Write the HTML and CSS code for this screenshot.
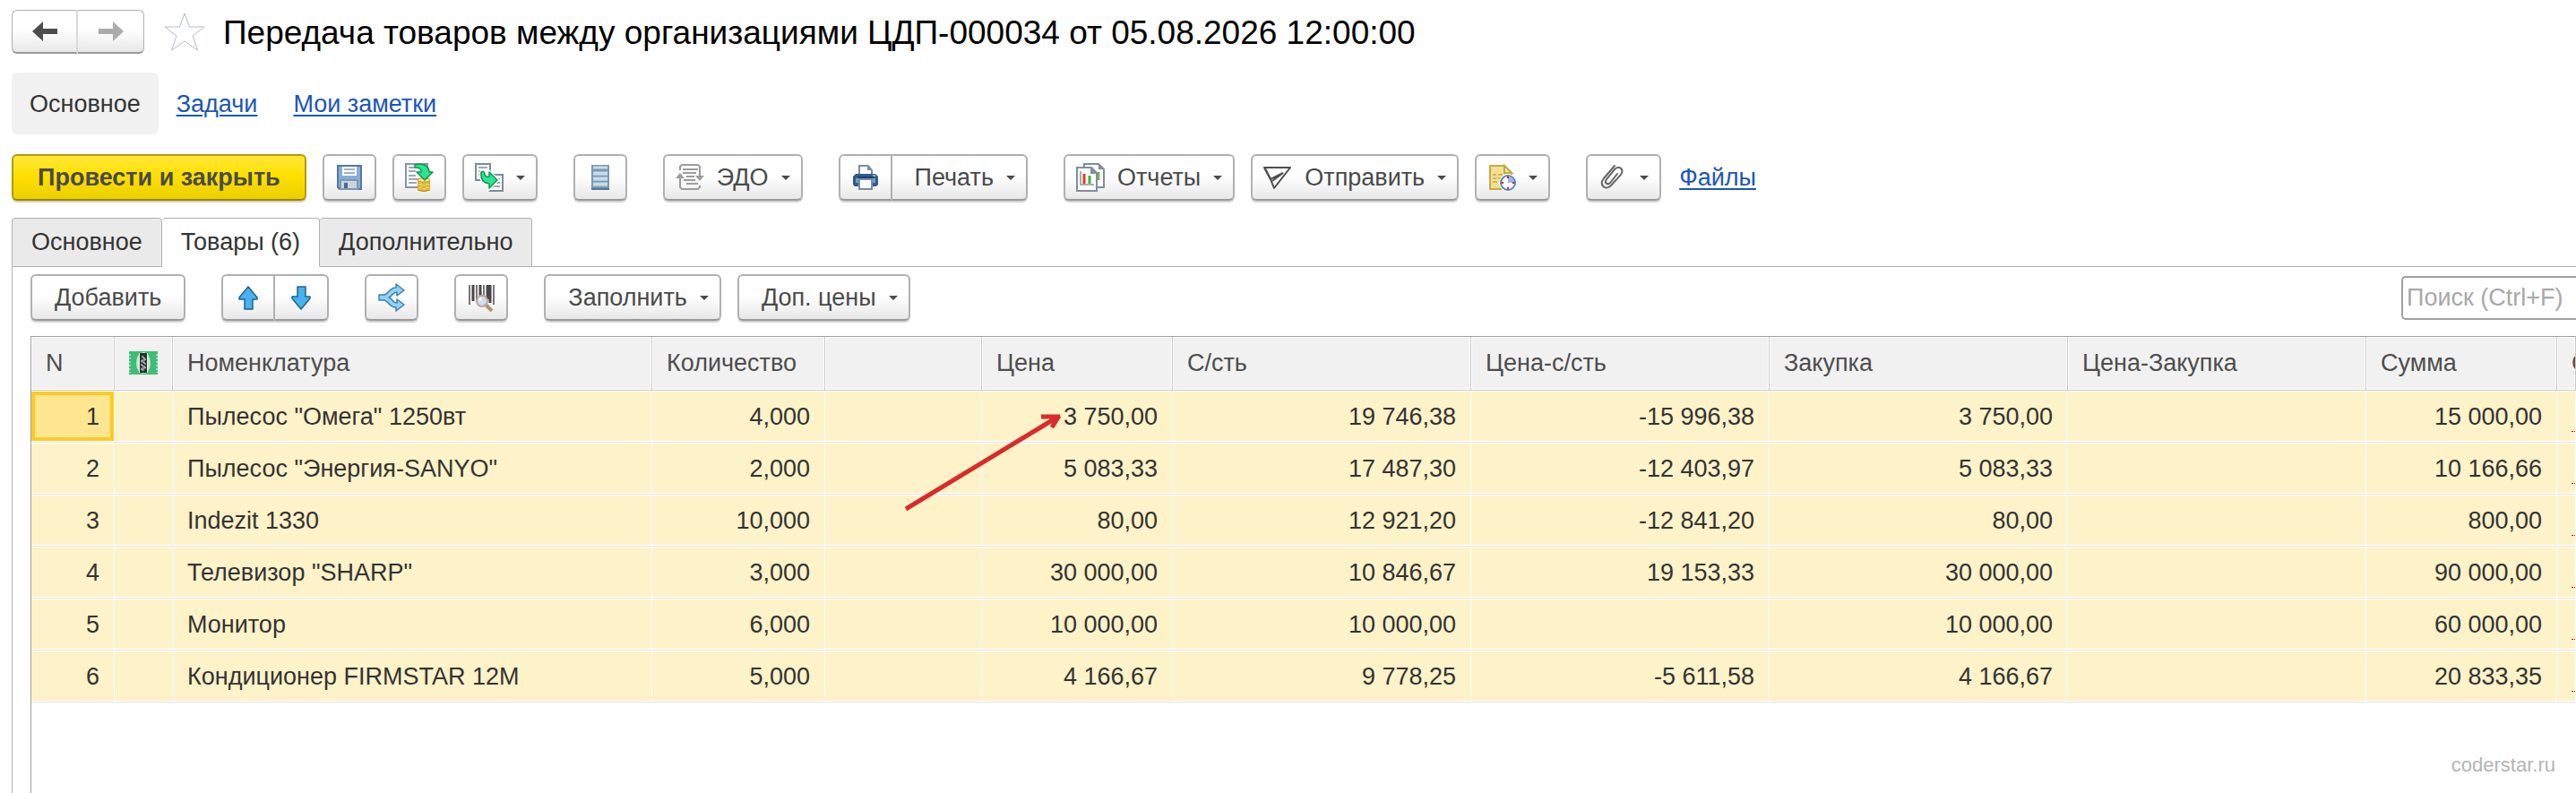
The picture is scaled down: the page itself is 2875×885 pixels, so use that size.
FILE: index.html
```
<!DOCTYPE html>
<html lang="ru">
<head>
    <meta charset="UTF-8">
    <meta name="viewport" content="width=device-width, initial-scale=1.0">
    <title>Передача товаров между организациями</title>
    <link rel="stylesheet" href="styles.css">
</head>
<body>
<header class="formHeader">
    <div class="btnGroup navButtons">
        <button type="button" class="btn" aria-label="Назад">
            <svg width="28" height="22" viewBox="0 0 28 22"><path d="M0 11 12 0V8H28V14H12V22Z" fill="#4d4d4d"/></svg>
        </button>
        <button type="button" class="btn" aria-label="Вперед">
            <svg width="28" height="22" viewBox="0 0 28 22"><path d="M28 11 16 0V8H0V14H16V22Z" fill="#ababab"/></svg>
        </button>
    </div>
    <button type="button" class="favorite" aria-label="В избранное">
        <svg width="48" height="46" viewBox="0 0 48 46"><path d="M24 2 29.500 17H46L33 27 38.500 43 24 33 9.500 43 15 27 2 17H18.500Z" fill="#fff" stroke="#b4bcc4" stroke-width="1"/></svg>
    </button>
    <h1>Передача товаров между организациями ЦДП-000034 от 05.08.2026 12:00:00</h1>
</header>

<nav class="sections">
    <span class="current">Основное</span>
    <a href="#tasks">Задачи</a>
    <a href="#notes">Мои заметки</a>
</nav>

<div class="commandBar">
    <div class="commands">
        <button type="button" class="btn primary">Провести и закрыть</button>
        <button type="button" class="btn" aria-label="Записать">
            <svg class="icon" viewBox="0 0 32 32">
                <path d="M2 2H30V30H5L2 27Z" fill="#86aedb"/>
                <path d="M3 2V27L5 29H29V2" fill="none" stroke="#54789f" stroke-width="2"/>
                <path d="M8 2H24V14H8Z" fill="#fff"/>
                <path d="M4 3H28" stroke="#54789f" stroke-width="2"/>
                <path d="M10 7H22M10 11H22" stroke="#9fb2c8" stroke-width="2"/>
                <path d="M6 19H25V29H6Z" fill="#cdd5d8" stroke="#7f97b0" stroke-width="2"/>
                <path d="M10 22H14V28H10Z" fill="#3f6da3"/>
            </svg>
        </button>
        <button type="button" class="btn" aria-label="Провести">
            <svg class="icon" viewBox="0 0 32 32">
                <path d="M1 1H25V27H1Z" fill="#fff" stroke="#8595a8" stroke-width="2"/>
                <path d="M4 5H11M4 9H12M4 14H12M4 18H16M4 22H13" stroke="#9aa8b6" stroke-width="2"/>
                <path d="M14 19H28V30Q21 34 14 30Z" fill="#e5b93a"/>
                <ellipse cx="21" cy="19" rx="7" ry="2" fill="#fff0a0" stroke="#c99716"/>
                <path d="M14 22Q21 26 28 22M14 26Q21 30 28 26M14 30Q21 33 28 30" fill="none" stroke="#b9860f" stroke-width="1"/>
                <path d="M15 23Q21 26 27 23M15 27Q21 30 27 27" fill="none" stroke="#ffe88c" stroke-width="1"/>
                <path d="M11 2Q26 -1 27 10H31L22 19 13 10H18Q19 5 11 5Z" fill="#27e88e" stroke="#14934d" stroke-width="1.500" stroke-linejoin="round"/>
            </svg>
        </button>
        <button type="button" class="btn" aria-label="Создать на основании">
            <svg class="icon" viewBox="0 0 32 32">
                <path d="M1 1H17V19H1Z" fill="#fff" stroke="#7d8b9b" stroke-width="2"/>
                <path d="M4 5H14M4 9H10M4 13H7" stroke="#9aa8b6" stroke-width="2"/>
                <path d="M15 13H31V31H15Z" fill="#fff" stroke="#7d8b9b" stroke-width="2"/>
                <path d="M24 18H28M24 22H28M19 26H28" stroke="#9aa8b6" stroke-width="2"/>
                <path d="M7 10Q11 8 11 13 12 16 16 15V10L25 19 16 28V23Q6 22 7 10Z" fill="#27e88e" stroke="#fff" stroke-width="4"/>
                <path d="M7 10Q11 8 11 13 12 16 16 15V10L25 19 16 28V23Q6 22 7 10Z" fill="#27e88e" stroke="#14934d" stroke-width="1.500" stroke-linejoin="round"/>
            </svg>
            <span class="caret"></span>
        </button>
    </div>
    <div class="commands">
        <button type="button" class="btn" aria-label="Структура подчиненности">
            <svg class="icon" viewBox="0 0 32 32">
                <path d="M6 2H26V30H6Z" fill="#789ab2"/>
                <path d="M8 5H24M8 11H24M8 17H24M8 23H24" stroke="#c6dcea" stroke-width="3"/>
                <path d="M8 13H24M8 19H24M8 25H24" stroke="#eef6fb" stroke-width="1"/>
                <path d="M6 29H26" stroke="#547693" stroke-width="2"/>
            </svg>
        </button>
    </div>
    <div class="commands">
        <button type="button" class="btn">
            <svg class="icon" viewBox="0 0 32 32">
                <path d="M5 8V4L7 2H25L27 4V15M5 16V27L7 29H25L27 27V25" fill="none" stroke="#9c9c9c" stroke-width="2"/>
                <path d="M8 7H25M8 11H23M12 15H21M9 19H22M12 23H25" stroke="#9c9c9c" stroke-width="2"/>
                <path d="M0 17 5 11 10 17ZM22 14H32L27 20Z" fill="#9c9c9c"/>
            </svg>
            ЭДО
            <span class="caret"></span>
        </button>
    </div>
    <div class="commands">
        <div class="btnGroup">
            <button type="button" class="btn" aria-label="Печать сразу">
                <svg class="icon" viewBox="0 0 32 32">
                    <path d="M9 14V3H19L23 8V14" fill="#fff" stroke="#7a8ca6" stroke-width="2"/>
                    <path d="M18 3V8H23Z" fill="#7a8ca6"/>
                    <path d="M5 12H27L30 15V24L28 26H4L2 24V15Z" fill="#2f5c8c"/>
                    <path d="M5 17H27V22H5Z" fill="#6f9ac4"/>
                    <path d="M7 16H25" stroke="#1d3f66" stroke-width="2"/>
                    <path d="M9 18H23V29H9Z" fill="#fff" stroke="#7a8ca6" stroke-width="2"/>
                    <path d="M24 14H27" stroke="#fff" stroke-width="1"/>
                </svg>
            </button>
            <button type="button" class="btn textBtn">Печать <span class="caret"></span></button>
        </div>
    </div>
    <div class="commands">
        <button type="button" class="btn">
            <svg class="icon" viewBox="0 0 32 32">
                <path d="M9 5V1H25L31 7V27H23" fill="#fff" stroke="#7d8f9c" stroke-width="2"/>
                <path d="M25 1V7H31Z" fill="#7d8f9c"/>
                <path d="M25 10V19" stroke="#78b159" stroke-width="3"/>
                <path d="M1 5H17L23 11V31H1Z" fill="#fff" stroke="#7d8f9c" stroke-width="2"/>
                <path d="M16 5V12H23Z" fill="#7d8f9c"/>
                <path d="M5 9V24H20" fill="none" stroke="#a3adb5" stroke-width="2"/>
                <path d="M9 12V23" stroke="#e8392b" stroke-width="3"/>
                <path d="M15 14V23" stroke="#46b02d" stroke-width="3"/>
            </svg>
            Отчеты
            <span class="caret"></span>
        </button>
        <button type="button" class="btn">
            <svg class="icon" viewBox="0 0 32 32">
                <path d="M1 5H30L12 28 8 18Z" fill="none" stroke="#4d4d4d" stroke-width="2" stroke-linejoin="round"/>
                <path d="M2 6 8 18 22 11 10 20" fill="none" stroke="#4d4d4d" stroke-width="2"/>
            </svg>
            Отправить
            <span class="caret"></span>
        </button>
        <button type="button" class="btn" aria-label="Напоминание">
            <svg class="icon" viewBox="0 0 32 32">
                <path d="M3 3H19L27 11V29H3Z" fill="#f5e08f" stroke="#c9a646" stroke-width="2" stroke-linejoin="round"/>
                <path d="M19 3V11H27Z" fill="#fff3b8" stroke="#c9a646" stroke-width="2"/>
                <path d="M6 13H10M12 13H17M6 17H10M12 17H15M6 21H11" stroke="#d3b356" stroke-width="2"/>
                <circle cx="23" cy="22" r="10" fill="#fff"/>
                <circle cx="23" cy="22" r="8" fill="#fff" stroke="#5a83b8" stroke-width="2"/>
                <path d="M23 22V15A7 7 0 0 1 30 22Z" fill="#9db4e6"/>
                <path d="M23 15V17M23 27V29M16 22H18M28 22H30" stroke="#e01b1b" stroke-width="2"/>
            </svg>
            <span class="caret"></span>
        </button>
    </div>
    <div class="commands filesGroup">
        <button type="button" class="btn" aria-label="Присоединенные файлы">
            <svg class="icon" viewBox="0 0 32 32">
                <path d="M18 3 6 17C0 25 8 31 14 25L25 13C29 7 23 2 18 7L9 18C6 22 10 25 13 22L21 12" fill="none" stroke="#666" stroke-width="2" stroke-linecap="round"/>
            </svg>
            <span class="caret"></span>
        </button>
        <a href="#files">Файлы</a>
    </div>
</div>

<div class="tabs" role="tablist">
    <button type="button" class="tab" role="tab" aria-selected="false">Основное</button>
    <button type="button" class="tab active" role="tab" aria-selected="true">Товары (6)</button>
    <button type="button" class="tab" role="tab" aria-selected="false">Дополнительно</button>
    <div class="tabsLine"></div>
</div>

<main class="panel">
    <div class="commandBar tableBar">
        <button type="button" class="btn textBtn addBtn">Добавить</button>
        <div class="btnGroup">
            <button type="button" class="btn" aria-label="Переместить вверх">
                <svg class="icon" viewBox="0 0 32 32"><path d="M16 4 26 16V18H21V29H12V18H6V16Z" fill="#48b1ee" stroke="#1d628f" stroke-width="1.500" stroke-linejoin="round"/></svg>
            </button>
            <button type="button" class="btn" aria-label="Переместить вниз">
                <svg class="icon" viewBox="0 0 32 32"><path d="M16 29 26 17V15H21V4H12V15H6V17Z" fill="#48b1ee" stroke="#1d628f" stroke-width="1.500" stroke-linejoin="round"/></svg>
            </button>
        </div>
        <button type="button" class="btn" aria-label="Разбить строку">
            <svg class="icon" viewBox="0 0 32 32"><path d="M2 13H8C13 12 13 5 21 5V1L30 8 22 14V10C17 10 17 15 13 16 17 17 17 22 22 22V18L30 24 21 31V27C13 27 13 20 8 19H2Z" fill="#90d2f5" stroke="#3b81ae" stroke-width="1.500" stroke-linejoin="round"/></svg>
        </button>
        <button type="button" class="btn" aria-label="Поиск по штрихкоду">
            <svg class="icon" viewBox="0 0 32 32">
                <path d="M3 2V24M11 2V20M19 2V16M30 2V24" stroke="#777" stroke-width="2"/>
                <path d="M7 2V20M15 2V16M23 2V18M26 2V22" stroke="#474747" stroke-width="3"/>
                <path d="M21 24 28 31" stroke="#b98d70" stroke-width="4"/>
                <circle cx="17" cy="20" r="6" fill="#cfdcf5" stroke="#c0a697" stroke-width="2"/>
                <circle cx="15" cy="18" r="2" fill="#eff5ff"/>
            </svg>
        </button>
        <div class="commands">
            <button type="button" class="btn textBtn">Заполнить <span class="caret"></span></button>
            <button type="button" class="btn textBtn">Доп. цены <span class="caret"></span></button>
        </div>
        <input type="text" class="search" placeholder="Поиск (Ctrl+F)" aria-label="Поиск">
    </div>

    <div class="grid">
        <table>
            <colgroup>
                <col class="colN">
                <col class="colMark">
                <col class="colName">
                <col class="colQty">
                <col class="colUnit">
                <col class="colSum">
                <col class="colCalc">
                <col class="colCalc">
                <col class="colCalc">
                <col class="colCalc">
                <col class="colSum">
                <col>
            </colgroup>
            <thead>
            <tr>
                <th>N</th>
                <th class="mark">
                    <svg width="32" height="26" viewBox="0 0 32 26" role="img" aria-label="Маркировка">
                        <path d="M0 0H32V26H0Z" fill="#3fbd78"/>
                        <path d="M1 3V24M31 3V24" stroke="#8fdcb2" stroke-width="2" stroke-dasharray="2 2"/>
                        <ellipse cx="16" cy="13" rx="8" ry="12" fill="#bfead2"/>
                        <path d="M11 2H21V24H11Z" fill="#e9f5ee"/>
                        <path d="M12 2H20V24H12Z" fill="#2b2f2d"/>
                        <path d="M14 6H16V8H18V10H14V12H17V14H19M13 15H15V17H18V19H14V21H17" fill="none" stroke="#dfe5e2" stroke-width="1"/>
                    </svg>
                </th>
                <th>Номенклатура</th>
                <th>Количество</th>
                <th></th>
                <th>Цена</th>
                <th>С/сть</th>
                <th>Цена-с/сть</th>
                <th>Закупка</th>
                <th>Цена-Закупка</th>
                <th>Сумма</th>
                <th>С</th>
            </tr>
            </thead>
            <tbody>
            <tr>
                <td class="num selected">1</td><td></td><td>Пылесос "Омега" 1250вт</td><td class="num">4,000</td><td></td>
                <td class="num">3 750,00</td><td class="num">19 746,38</td><td class="num">-15 996,38</td><td class="num">3 750,00</td><td></td><td class="num">15 000,00</td><td><span class="required"></span></td>
            </tr>
            <tr>
                <td class="num">2</td><td></td><td>Пылесос "Энергия-SANYO"</td><td class="num">2,000</td><td></td>
                <td class="num">5 083,33</td><td class="num">17 487,30</td><td class="num">-12 403,97</td><td class="num">5 083,33</td><td></td><td class="num">10 166,66</td><td><span class="required"></span></td>
            </tr>
            <tr>
                <td class="num">3</td><td></td><td>Indezit 1330</td><td class="num">10,000</td><td></td>
                <td class="num">80,00</td><td class="num">12 921,20</td><td class="num">-12 841,20</td><td class="num">80,00</td><td></td><td class="num">800,00</td><td><span class="required"></span></td>
            </tr>
            <tr>
                <td class="num">4</td><td></td><td>Телевизор "SHARP"</td><td class="num">3,000</td><td></td>
                <td class="num">30 000,00</td><td class="num">10 846,67</td><td class="num">19 153,33</td><td class="num">30 000,00</td><td></td><td class="num">90 000,00</td><td><span class="required"></span></td>
            </tr>
            <tr>
                <td class="num">5</td><td></td><td>Монитор</td><td class="num">6,000</td><td></td>
                <td class="num">10 000,00</td><td class="num">10 000,00</td><td></td><td class="num">10 000,00</td><td></td><td class="num">60 000,00</td><td><span class="required"></span></td>
            </tr>
            <tr>
                <td class="num">6</td><td></td><td>Кондиционер FIRMSTAR 12М</td><td class="num">5,000</td><td></td>
                <td class="num">4 166,67</td><td class="num">9 778,25</td><td class="num">-5 611,58</td><td class="num">4 166,67</td><td></td><td class="num">20 833,35</td><td><span class="required"></span></td>
            </tr>
            </tbody>
        </table>
        <!-- pointer to the price cell -->
        <svg class="pointer" width="180" height="112" viewBox="0 0 180 112">
            <path d="M3 108 173 5M154 5H175M166 17 174 4" fill="none" stroke="#d92b2b" stroke-width="5"/>
        </svg>
        <span class="watermark">coderstar.ru</span>
    </div>
</main>
</body>
</html>
```

FILE: styles.css
```
* {
    box-sizing: border-box;
}

body {
    margin: 0;
    padding: 11px 0 0 13px;
    min-height: 100vh;
    display: flex;
    flex-direction: column;
    overflow-x: hidden;
    background: #fff;
    color: #333;
    font-family: "Liberation Sans", Arial, sans-serif;
    font-size: 27px;
    line-height: 32px;
}

button, input {
    font: inherit;
    color: inherit;
}

a {
    color: #1a56b8;
    text-decoration: underline;
    text-decoration-thickness: 2px;
    text-underline-offset: 3px;
}

/*Header*/
.formHeader {
    display: flex;
    align-items: center;
    height: 49px;
}

.formHeader h1 {
    margin: 0 0 0 19px;
    padding-top: 2px;
    color: #000;
    font-size: 37px;
    line-height: 48px;
    font-weight: 400;
    white-space: nowrap;
}

.favorite {
    display: flex;
    margin-left: 21px;
    padding: 0;
    border: 0;
    background: none;
    cursor: pointer;
}

/*Sections*/
.sections {
    display: flex;
    align-items: center;
    gap: 40px;
    margin-top: 21px;
}

.sections a {
    padding-top: 1px;
}

.sections .current {
    margin-right: -20px;
    padding: 19px 20px 18px;
    border-radius: 6px;
    background: #f1f1f1;
}

/*Buttons*/
.btn {
    display: flex;
    align-items: center;
    justify-content: center;
    gap: 14px;
    min-width: 60px;
    height: 52px;
    padding: 0 12px;
    border: 2px solid #b0b0b0;
    border-bottom-color: #9a9a9a;
    border-radius: 6px;
    background: linear-gradient(#fff 45%, #e8e8e8);
    box-shadow: 0 2px 0 #d2d2d2;
    color: #4a4a4a;
    white-space: nowrap;
    cursor: pointer;
}

.btn.textBtn {
    padding-left: 25px;
}

.btn.addBtn {
    padding-right: 25px;
}

.btn.primary {
    padding: 0 27px;
    border-color: #b39b00;
    border-bottom-color: #9c8700;
    background: linear-gradient(#ffe83a, #ffe000 45%, #ebcf00);
    font-weight: 700;
}

.btnGroup {
    display: flex;
}

.btnGroup .btn:first-child {
    border-top-right-radius: 0;
    border-bottom-right-radius: 0;
}

.btnGroup .btn:last-child {
    border-left: 0;
    border-top-left-radius: 0;
    border-bottom-left-radius: 0;
}

.navButtons .btn {
    width: 74px;
    height: 49px;
    border-width: 1px;
    border-bottom-width: 2px;
    box-shadow: none;
}

.navButtons .btn:first-child {
    border-right: 2px solid #dadada;
}

.icon {
    width: 32px;
    height: 32px;
    flex: none;
}

.caret {
    border: 5px solid transparent;
    border-top-color: #4a4a4a;
    border-bottom: 0;
}

/*Command bars*/
.commandBar {
    display: flex;
    align-items: center;
    gap: 40px;
    margin-top: 22px;
}

.commands {
    display: flex;
    align-items: center;
    gap: 18px;
}

.filesGroup {
    gap: 20px;
}

.tableBar {
    margin: 8px 0 17px;
}

.search {
    width: 195px;
    height: 49px;
    margin-left: auto;
    padding: 0 0 0 4px;
    border: 2px solid #a0a0a0;
    border-right: 0;
    border-radius: 5px 0 0 5px;
    outline: none;
}

.search::placeholder {
    color: #a8a8a8;
}

/*Tabs*/
.tabs {
    display: flex;
    margin-top: 19px;
}

.tab {
    height: 55px;
    padding: 0 21px 2px;
    border: 1px solid #b0b0b0;
    border-radius: 4px 4px 0 0;
    background: #eaeaea;
    white-space: nowrap;
    cursor: pointer;
}

.tab + .tab {
    border-left: 0;
}

.tab.active {
    border-bottom-color: #fff;
    background: #fff;
}

.tabsLine {
    flex: 1;
    border-bottom: 1px solid #b0b0b0;
}

/*Panel*/
.panel {
    flex: 1;
    display: flex;
    flex-direction: column;
    padding-left: 20px;
    border-left: 1px solid #b0b0b0;
}

.grid {
    position: relative;
    flex: 1;
    border-top: 1px solid #a0a0a0;
    border-left: 1px solid #a0a0a0;
}

.grid table {
    width: 100%;
    table-layout: fixed;
    border-collapse: separate;
    border-spacing: 0;
}

.colN { width: 93px; }
.colMark { width: 65px; }
.colName { width: 535px; }
.colQty { width: 193px; }
.colUnit { width: 175px; }
.colSum { width: 213px; }
.colCalc { width: 333px; }

.grid th, .grid td {
    padding: 0 0 0 16px;
    text-align: left;
    font-weight: 400;
    white-space: nowrap;
    overflow: hidden;
}

.grid th {
    height: 60px;
    padding-bottom: 2px;
    border-right: 1px solid #c8c8c8;
    border-bottom: 1px solid #c8c8c8;
    background: #f1f1f1;
    box-shadow: inset 0 0 0 1px #fff;
    color: #4d4d4d;
}

.grid td {
    height: 58px;
    border-right: 1px solid #fff;
    border-bottom: 1px solid #e2e2e2;
    background: #fef2c8;
    box-shadow: inset 0 1px #fff, inset 0 -1px #fff;
}

.grid .mark {
    padding-left: 0;
}

.grid .mark svg {
    display: block;
    margin: 0 auto;
}

.grid td.num {
    padding: 0 16px 0 0;
    text-align: right;
}

.grid td.selected {
    background: #fee58f;
    box-shadow: inset 0 1px #fff, inset 0 -1px #fff, inset 0 5px #fccb1f, inset 0 -5px #fccb1f, inset 4px 0 #fccb1f, inset -4px 0 #fccb1f;
}

/* underline of an empty mandatory value */
.required {
    display: block;
    height: 34px;
    border-bottom: 1px dotted #e00000;
}

.pointer {
    position: absolute;
    left: 973px;
    top: 84px;
}

.watermark {
    position: absolute;
    right: 23px;
    bottom: 15px;
    color: #b4b4b4;
    font-size: 22px;
}
```
